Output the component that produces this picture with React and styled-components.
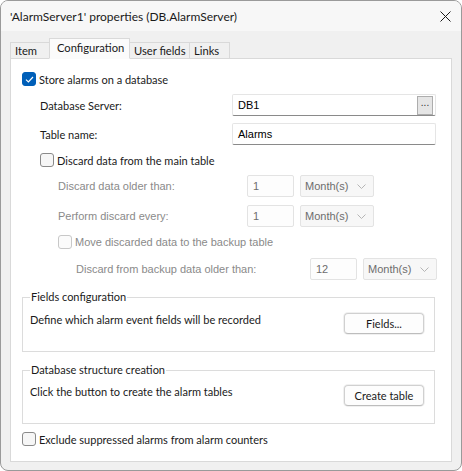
import styled, { createGlobalStyle } from 'styled-components';

const GlobalStyle = createGlobalStyle`
    html, body {
        margin: 0;
        padding: 0;
        background: #ffffff;
    }
    * {
        box-sizing: border-box;
    }
`;

const UI_FONT = `Lato, "Noto Sans", sans-serif`;
const CTL_FONT = `"Liberation Sans", Arial, sans-serif`;

const Window = styled.div`
    width: 462px;
    height: 471px;
    border: 1px solid #9a9a9a;
    border-radius: 8px;
    overflow: hidden;
    background: #f0f0f0;
    display: flex;
    flex-direction: column;
    font-family: ${UI_FONT};
    font-size: 11px;
    color: #1a1a1a;
`;

const TitleBar = styled.div`
    height: 30px;
    flex: none;
    display: flex;
    align-items: center;
    justify-content: space-between;
    padding: 0 9px 0 9px;
    background: #f7f7f7;
`;

const Title = styled.span`
    font-size: 12px;
    color: #1a1a1a;
`;

const CloseButton = styled.div`
    width: 14px;
    height: 14px;
    display: flex;
    align-items: center;
    justify-content: center;
`;

const Body = styled.div`
    flex: 1;
    display: flex;
    flex-direction: column;
    padding: 7px 9px 8px 9px;
`;

const TabStrip = styled.div`
    display: flex;
    align-items: flex-end;
    height: 21px;
    position: relative;
    z-index: 1;
    margin-bottom: -1px;
`;

const Tab = styled.div`
    height: ${p => (p.$active ? '21px' : '17px')};
    width: ${p => p.$w}px;
    margin-left: ${p => (p.$first ? '0' : '-1px')};
    padding-left: ${p => (p.$active ? '7px' : '4px')};
    padding-bottom: ${p => (p.$active ? '2px' : '0')};
    display: flex;
    align-items: center;
    white-space: nowrap;
    border: 1px solid #d9d9d9;
    border-bottom: ${p => (p.$active ? '1px solid #fbfbfb' : '1px solid #d9d9d9')};
    background: ${p => (p.$active ? '#fbfbfb' : '#f0f0f0')};
    font-size: 11.2px;
    position: relative;
    z-index: ${p => (p.$active ? 2 : 1)};
`;

const Panel = styled.div`
    flex: 1;
    background: #ffffff;
    border: 1px solid #d9d9d9;
    padding: 10px 16px 0 11px;
    display: flex;
    flex-direction: column;
`;

const CheckRow = styled.label`
    display: flex;
    align-items: center;
    height: 20px;
    white-space: nowrap;
    margin-left: ${p => p.$indent || 0}px;
    margin-top: ${p => p.$mt || 0}px;
    color: ${p => (p.$disabled ? '#8a8a8a' : '#1a1a1a')};
    font-family: ${p => (p.$disabled ? CTL_FONT : UI_FONT)};
    font-size: 11px;
`;

const Box = styled.span`
    width: 14px;
    height: 14px;
    border-radius: 3px;
    margin-right: 3px;
    flex: none;
    display: flex;
    align-items: center;
    justify-content: center;
    border: 1px solid ${p => (p.$checked ? '#005fb8' : p.$disabled ? '#c8c8c8' : '#8a8a8a')};
    background: ${p => (p.$checked ? '#005fb8' : p.$disabled ? '#fbfbfb' : '#f6f6f6')};
`;

const FieldRow = styled.div`
    display: flex;
    align-items: center;
    height: 22px;
    margin-left: ${p => p.$indent || 0}px;
    margin-top: ${p => p.$mt || 0}px;
`;

const Label = styled.span`
    width: ${p => p.$w}px;
    flex: none;
    white-space: nowrap;
    font-family: ${p => (p.$disabled ? CTL_FONT : UI_FONT)};
    font-size: 11px;
    color: ${p => (p.$disabled ? '#8a8a8a' : '#1a1a1a')};
`;

const TextBox = styled.div`
    width: ${p => p.$w}px;
    height: 22px;
    flex: none;
    display: flex;
    align-items: center;
    justify-content: space-between;
    padding: 0 2px 0 5px;
    border: 1px solid ${p => (p.$disabled ? '#e3e3e3' : '#e5e5e5')};
    border-bottom-color: ${p => (p.$disabled ? '#e3e3e3' : '#8a8a8a')};
    border-radius: 2px;
    background: ${p => (p.$disabled ? '#fdfdfd' : '#ffffff')};
    font-family: ${CTL_FONT};
    font-size: 11px;
    color: ${p => (p.$disabled ? '#6d6d6d' : '#000000')};
`;

const BrowseButton = styled.div`
    width: 16px;
    height: 19px;
    border: 1px solid #adadad;
    background: #e5e5e5;
    font-size: 10px;
    line-height: 12px;
    text-align: center;
    color: #333;
`;

const Select = styled.div`
    width: 74px;
    height: 22px;
    flex: none;
    margin-left: 6px;
    display: flex;
    align-items: center;
    justify-content: space-between;
    padding: 0 7px 0 4px;
    border: 1px solid #e3e3e3;
    border-radius: 2px;
    background: #f7f7f7;
    font-family: ${CTL_FONT};
    font-size: 11px;
    color: #6d6d6d;
`;

const GroupBox = styled.fieldset`
    margin: ${p => p.$mt}px 0 0 0;
    padding: ${p => p.$pt}px 10px 17px 7px;
    border: 1px solid #dcdcdc;
    min-width: 0;
    display: flex;
    align-items: flex-start;
    justify-content: space-between;
`;

const Legend = styled.legend`
    padding: 0 1px;
    margin-left: 0;
    line-height: 16px;
    font-size: 11px;
    color: #1a1a1a;
`;

const GroupText = styled.span`
    line-height: 14px;
    font-size: 11px;
`;

const PushButton = styled.div`
    width: 80px;
    height: 21px;
    display: flex;
    align-items: center;
    justify-content: center;
    border: 1px solid #d0d0d0;
    border-bottom-color: #bdbdbd;
    border-radius: 4px;
    background: #fdfdfd;
    box-shadow: 0 0 0 1px #f0f0f0;
    font-size: 11px;
    color: #1a1a1a;
`;

const Chevron = () => (
    <svg width="9" height="5" viewBox="0 0 9 5">
        <path d="M0.5 0.5 L4.5 4.5 L8.5 0.5" fill="none" stroke="#b5b5b5" strokeWidth="1" />
    </svg>
);

const Check = ({ checked, disabled }) => (
    <Box $checked={checked} $disabled={disabled}>
        {checked ? (
            <svg width="9" height="7" viewBox="0 0 9 7">
                <path d="M1 3.6 L3.4 6 L8 1" fill="none" stroke="#ffffff" strokeWidth="1.2" />
            </svg>
        ) : null}
    </Box>
);

const tabs = [
    { name: 'Item', w: 40 },
    { name: 'Configuration', w: 81, active: true },
    { name: 'User fields', w: 61 },
    { name: 'Links', w: 41 },
];

const App = () => {
    return (
        <>
            <GlobalStyle />
            <Window>
                <TitleBar>
                    <Title>'AlarmServer1' properties (DB.AlarmServer)</Title>
                    <CloseButton>
                        <svg width="11" height="11" viewBox="0 0 11 11">
                            <path d="M0.5 0.5 L10.5 10.5 M10.5 0.5 L0.5 10.5" stroke="#1a1a1a" strokeWidth="1" />
                        </svg>
                    </CloseButton>
                </TitleBar>
                <Body>
                    <TabStrip>
                        {tabs.map((t, i) => (
                            <Tab key={t.name} $w={t.w} $active={t.active} $first={i === 0}>
                                {t.name}
                            </Tab>
                        ))}
                    </TabStrip>
                    <Panel>
                        <CheckRow>
                            <Check checked />
                            Store alarms on a database
                        </CheckRow>

                        <FieldRow $indent={18} $mt={5}>
                            <Label $w={192}>Database Server:</Label>
                            <TextBox $w={204}>
                                DB1
                                <BrowseButton>...</BrowseButton>
                            </TextBox>
                        </FieldRow>
                        <FieldRow $indent={18} $mt={7}>
                            <Label $w={192}>Table name:</Label>
                            <TextBox $w={204}>Alarms</TextBox>
                        </FieldRow>

                        <CheckRow $indent={18} $mt={5}>
                            <Check />
                            Discard data from the main table
                        </CheckRow>

                        <FieldRow $indent={36} $mt={5}>
                            <Label $w={189} $disabled>Discard data older than:</Label>
                            <TextBox $w={47} $disabled>1</TextBox>
                            <Select>Month(s)<Chevron /></Select>
                        </FieldRow>
                        <FieldRow $indent={36} $mt={8}>
                            <Label $w={189} $disabled>Perform discard every:</Label>
                            <TextBox $w={47} $disabled>1</TextBox>
                            <Select>Month(s)<Chevron /></Select>
                        </FieldRow>

                        <CheckRow $indent={36} $mt={5} $disabled>
                            <Check disabled />
                            Move discarded data to the backup table
                        </CheckRow>
                        <FieldRow $indent={54} $mt={6}>
                            <Label $w={234} $disabled>Discard from backup data older than:</Label>
                            <TextBox $w={47} $disabled>12</TextBox>
                            <Select>Month(s)<Chevron /></Select>
                        </FieldRow>

                        <GroupBox $mt={9} $pt={8}>
                            <Legend>Fields configuration</Legend>
                            <GroupText>Define which alarm event fields will be recorded</GroupText>
                            <PushButton>Fields...</PushButton>
                        </GroupBox>

                        <GroupBox $mt={10} $pt={7}>
                            <Legend>Database structure creation</Legend>
                            <GroupText>Click the button to create the alarm tables</GroupText>
                            <PushButton>Create table</PushButton>
                        </GroupBox>

                        <CheckRow $mt={5}>
                            <Check />
                            Exclude suppressed alarms from alarm counters
                        </CheckRow>
                    </Panel>
                </Body>
            </Window>
        </>
    );
};

export default App;
